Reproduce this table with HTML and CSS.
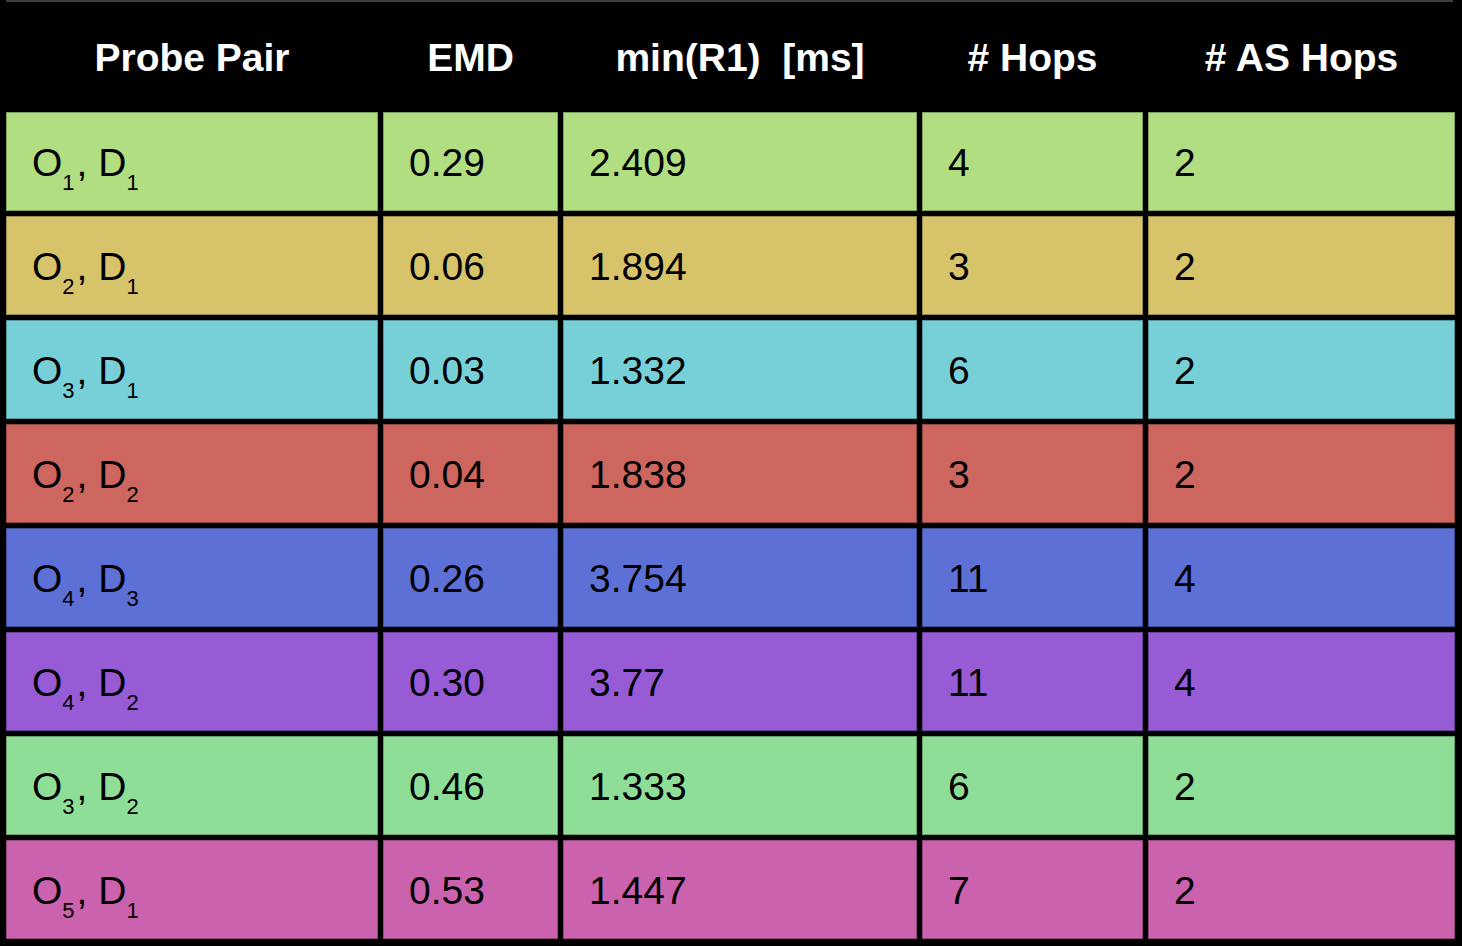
FILE: index.html
```html
<!DOCTYPE html>
<html>
<head>
<meta charset="utf-8">
<link rel="stylesheet" href="styles.css">
</head>
<body>
<div class="page">
  <div class="top-rule"></div>
  <div class="table">
    <div class="head">Probe Pair</div>
    <div class="head">EMD</div>
    <div class="head">min(R1)  [ms]</div>
    <div class="head"># Hops</div>
    <div class="head"># AS Hops</div>

    <div class="row row-lime">
      <div class="cell"><span>O<span class="sub">1</span>, D<span class="sub">1</span></span></div>
      <div class="cell">0.29</div><div class="cell">2.409</div><div class="cell">4</div><div class="cell">2</div>
    </div>
    <div class="row row-mustard">
      <div class="cell"><span>O<span class="sub">2</span>, D<span class="sub">1</span></span></div>
      <div class="cell">0.06</div><div class="cell">1.894</div><div class="cell">3</div><div class="cell">2</div>
    </div>
    <div class="row row-cyan">
      <div class="cell"><span>O<span class="sub">3</span>, D<span class="sub">1</span></span></div>
      <div class="cell">0.03</div><div class="cell">1.332</div><div class="cell">6</div><div class="cell">2</div>
    </div>
    <div class="row row-red">
      <div class="cell"><span>O<span class="sub">2</span>, D<span class="sub">2</span></span></div>
      <div class="cell">0.04</div><div class="cell">1.838</div><div class="cell">3</div><div class="cell">2</div>
    </div>
    <div class="row row-blue">
      <div class="cell"><span>O<span class="sub">4</span>, D<span class="sub">3</span></span></div>
      <div class="cell">0.26</div><div class="cell">3.754</div><div class="cell">11</div><div class="cell">4</div>
    </div>
    <div class="row row-purple">
      <div class="cell"><span>O<span class="sub">4</span>, D<span class="sub">2</span></span></div>
      <div class="cell">0.30</div><div class="cell">3.77</div><div class="cell">11</div><div class="cell">4</div>
    </div>
    <div class="row row-mint">
      <div class="cell"><span>O<span class="sub">3</span>, D<span class="sub">2</span></span></div>
      <div class="cell">0.46</div><div class="cell">1.333</div><div class="cell">6</div><div class="cell">2</div>
    </div>
    <div class="row row-pink">
      <div class="cell"><span>O<span class="sub">5</span>, D<span class="sub">1</span></span></div>
      <div class="cell">0.53</div><div class="cell">1.447</div><div class="cell">7</div><div class="cell">2</div>
    </div>
  </div>
</div>
</body>
</html>
```
FILE: styles.css
```css
html, body {
  margin: 0;
  padding: 0;
  background: #000;
}
body {
  width: 1462px;
  height: 946px;
  overflow: hidden;
  font-family: "Liberation Sans", Arial, sans-serif;
}
.page {
  position: relative;
}
.top-rule {
  position: absolute;
  top: 0;
  left: 6px;
  width: 1447px;
  height: 2px;
  background: #3c3c3c;
}
.table {
  display: grid;
  grid-template-columns: 372px 175px 354px 221px 307px;
  grid-template-rows: 107px repeat(8, 99px);
  column-gap: 5px;
  row-gap: 5px;
  padding-left: 6px;
}
.head {
  display: flex;
  align-items: center;
  justify-content: center;
  padding-top: 8px;
  color: #fff;
  font-weight: bold;
  font-size: 39px;
  white-space: pre;
}
.row {
  display: contents;
}
.cell {
  display: flex;
  align-items: center;
  padding-left: 26px;
  padding-top: 2px;
  background: var(--bg);
  box-shadow: inset 0 0 0 1px rgba(0, 0, 0, 0.28);
  color: #000;
  font-size: 39px;
  white-space: pre;
}
.sub {
  font-size: 22px;
  position: relative;
  top: 14px;
  padding-right: 2px;
}
.row-lime { --bg: #b0de80; }
.row-mustard { --bg: #d6c36a; }
.row-cyan { --bg: #77d0d8; }
.row-red { --bg: #cc665e; }
.row-blue { --bg: #5c70d6; }
.row-purple { --bg: #975bd6; }
.row-mint { --bg: #8fde98; }
.row-pink { --bg: #cb62ae; }
```
